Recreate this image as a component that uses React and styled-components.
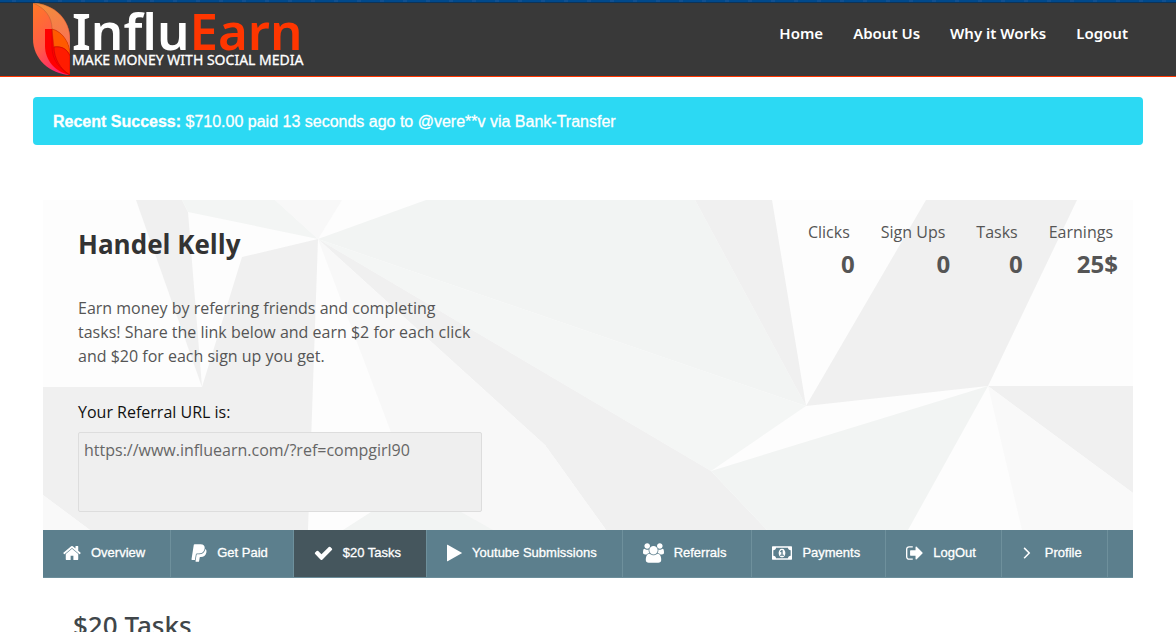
import React from "react";
import styled, { createGlobalStyle } from "styled-components";
import { FaPaypal } from "react-icons/fa";

const GlobalStyle = createGlobalStyle`
  *, *::before, *::after { box-sizing: border-box; }
  body {
    margin: 0;
    background: #fff;
    color: #555;
    font: 16px/24px "Open Sans", sans-serif;
  }
  h1, h2, p, ul, dl, dd { margin: 0; padding: 0; }
`;

const TopStrip = styled.div`
  height: 3px;
  background: repeating-linear-gradient(90deg, #00498c 0 12px, #0f5092 12px 16px, #00498c 16px 23px);
  border-bottom: 1px solid #0b3359;
`;

const Header = styled.header`
  display: flex;
  justify-content: space-between;
  height: 74px;
  padding: 0 33px;
  background: #393939;
  border-bottom: 1px solid #ff3600;
`;

const Brand = styled.a`
  display: flex;
  gap: 2px;
  color: #fff;
  text-decoration: none;
  font-family: "Noto Sans", sans-serif;
`;

const Leaf = styled.svg`
  width: 37px;
  height: 72px;
`;

const BrandText = styled.span`
  display: flex;
  flex-direction: column;
  white-space: nowrap;
`;

const BrandName = styled.span`
  font-size: 51px;
  line-height: 48px;
  height: 48px;
  font-weight: 600;
  padding-top: 3px;
`;

const Accent = styled.span`
  color: #ff3600;
`;

const Tagline = styled.span`
  font-size: 14px;
  line-height: 18px;
  font-weight: 400;
  -webkit-text-stroke: 0.3px #fff;
`;

const TopNav = styled.nav`
  display: flex;
  gap: 30px;
  padding: 18px 15px 0 0;
`;

const TopLink = styled.a`
  color: #fff;
  font: 600 15px/24px "Noto Sans", sans-serif;
  text-decoration: none;
  white-space: nowrap;
`;

const Main = styled.main`
  padding: 20px 33px;
`;

const Alert = styled.div`
  padding: 13px 20px 11px;
  border-radius: 4px;
  background: #2cd9f3;
  color: #fff;
  font-family: "Liberation Sans", Arial, sans-serif;
  -webkit-text-stroke: 0.3px #fff;
`;

const Panel = styled.section`
  margin: 55px 10px 0;
`;

const Hero = styled.div`
  position: relative;
  display: flex;
  justify-content: space-between;
  min-height: 330px;
  padding: 20px 15px 18px 35px;
`;

const Backdrop = styled.svg`
  position: absolute;
  inset: 0;
  width: 100%;
  height: 100%;
`;

const Profile = styled.div`
  position: relative;
  width: 404px;
`;

const Name = styled.h1`
  color: #333;
  font-size: 26px;
  line-height: 48px;
  font-weight: 700;
`;

const Intro = styled.p`
  margin-top: 28px;
`;

const UrlLabel = styled.label`
  display: block;
  margin-top: 32px;
  color: #111;
`;

const UrlBox = styled.textarea`
  display: block;
  width: 100%;
  height: 80px;
  margin-top: 8px;
  padding: 5px;
  border: 1px solid #ddd;
  border-radius: 2px;
  background: #efefef;
  color: #666;
  font: inherit;
  resize: none;
`;

const Stats = styled.dl`
  position: relative;
  display: flex;
  gap: 26px;
`;

const Stat = styled.div`
  display: flex;
  flex-direction: column;
  text-align: right;
`;

const StatLabel = styled.dt`
  padding-right: 5px;
`;

const StatValue = styled.dd`
  font-size: 24px;
  line-height: 40px;
  font-weight: 700;
`;

const Tabs = styled.nav`
  display: flex;
  height: 48px;
  background: #5c7f8d;
  border-bottom: 1px solid #6b8e9b;
`;

const Tab = styled.a`
  display: flex;
  align-items: center;
  gap: 10px;
  padding: 0 25px 2px 20px;
  border-right: 1px solid #6e909c;
  background: ${(p) => (p.$active ? "#45565d" : "transparent")};
  color: #fff;
  font: 13px/20px "Liberation Sans", Arial, sans-serif;
  -webkit-text-stroke: 0.3px #fff;
  text-decoration: none;
  white-space: nowrap;
`;

const Glyph = styled.svg`
  flex: none;
  width: ${(p) => p.$w}px;
  height: 20px;
  fill: currentColor;
`;

const PaypalGlyph = styled(FaPaypal)`
  flex: none;
  width: 16px;
  height: 20px;
`;

const Heading = styled.h2`
  margin: 28px 0 0 30px;
  color: #40464a;
  font: 500 26px/38px "Noto Sans", sans-serif;
`;

const icons = {
  home: { w: 18, box: "64 0 1664 1792", d: "M1472 992v480q0 26-19 45t-45 19h-384v-384h-256v384h-384q-26 0-45-19t-19-45v-480q0-1 .5-3t.5-3l575-474 575 474q1 2 1 6zm223-69l-62 74q-8 9-21 11h-3q-13 0-21-7l-692-577-692 577q-12 8-24 7-13-2-21-11l-62-74q-8-10-7-23.5t11-21.5l719-599q32-26 76-26t76 26l244 204v-195q0-14 9-23t23-9h192q14 0 23 9t9 23v408l219 182q10 8 11 21.5t-7 23.5z" },
  check: { w: 19, box: "64 0 1664 1792", d: "M1671 566q0 40-28 68l-724 724-136 136q-28 28-68 28t-68-28l-136-136-362-362q-28-28-28-68t28-68l136-136q28-28 68-28t68 28l294 295 656-657q28-28 68-28t68 28l136 136q28 28 28 68z" },
  play: { w: 15, box: "192 100 1408 1592", d: "M1576 927l-1328 738q-23 13-39.5 3t-16.5-36v-1472q0-26 16.5-36t39.5 3l1328 738q23 13 23 31t-23 31z" },
  users: { w: 21, box: "64 0 1920 1792", d: "M657 896q-162 5-265 128h-134q-82 0-138-40.5t-56-118.5q0-353 124-353 6 0 43.5 21t97.5 42.5 119 21.5q67 0 133-23-5 37-5 66 0 139 81 256zm1071 637q0 120-73 189.5t-194 69.5h-874q-121 0-194-69.5t-73-189.5q0-53 3.5-103.5t14-109 26.5-108.5 43-97.5 62-81 85.5-53.5 111.5-20q10 0 43 21.5t73 48 107 48 135 21.5 135-21.5 107-48 73-48 43-21.5q61 0 111.5 20t85.5 53.5 62 81 43 97.5 26.5 108.5 14 109 3.5 103.5zm-1024-1277q0 106-75 181t-181 75-181-75-75-181 75-181 181-75 181 75 75 181zm704 384q0 159-112.5 271.5t-271.5 112.5-271.5-112.5-112.5-271.5 112.5-271.5 271.5-112.5 271.5 112.5 112.5 271.5zm576 225q0 78-56 118.5t-138 40.5h-134q-103-123-265-128 81-117 81-256 0-29-5-66 66 23 133 23 59 0 119-21.5t97.5-42.5 43.5-21q124 0 124 353zm-128-609q0 106-75 181t-181 75-181-75-75-181 75-181 181-75 181 75 75 181z" },
  money: { w: 20, box: "0 0 1920 1792", d: "M768 1152h384v-96h-128v-448h-114l-148 137 77 80q42-37 55-57h2v288h-128v96zm512-256q0 70-21 142t-59.5 134-101.5 101-138 39-138-39-101.5-101-59.5-134-21-142 21-142 59.5-134 101.5-101 138-39 138 39 101.5 101 59.5 134 21 142zm512 256v-512q-106 0-181-75t-75-181h-1152q0 106-75 181t-181 75v512q106 0 181 75t75 181h1152q0-106 75-181t181-75zm128-832v1152q0 26-19 45t-45 19h-1792q-26 0-45-19t-19-45v-1152q0-26 19-45t45-19h1792q26 0 45 19t19 45z" },
  exit: { w: 17, box: "64 0 1600 1792", d: "M704 1440q0 4 1 20t.5 26.5-3 23.5-10 19.5-20.5 6.5h-320q-119 0-203.5-84.5t-84.5-203.5v-704q0-119 84.5-203.5t203.5-84.5h320q13 0 22.5 9.5t9.5 22.5q0 4 1 20t.5 26.5-3 23.5-10 19.5-20.5 6.5h-320q-66 0-113 47t-47 113v704q0 66 47 113t113 47h312l11.5 1 11.5 3 8 5.5 7 9 2 13.5zm928-544q0 26-19 45l-544 544q-19 19-45 19t-45-19-19-45v-288h-448q-26 0-45-19t-19-45v-384q0-26 19-45t45-19h448v-288q0-26 19-45t45-19 45 19l544 544q19 19 19 45z" },
  angle: { w: 13, box: "500 60 1040 1792", d: "M1171 960q0 13-10 23l-466 466q-10 10-23 10t-23-10l-50-50q-10-10-10-23t10-23l393-393-393-393q-10-10-10-23t10-23l50-50q10-10 23-10t23 10l466 466q10 10 10 23z" },
};

const Icon = ({ name }) =>
  name === "paypal" ? (
    <PaypalGlyph aria-hidden="true" />
  ) : (
    <Glyph $w={icons[name].w} viewBox={icons[name].box} aria-hidden="true">
      <path d={icons[name].d} />
    </Glyph>
  );

const facets = [
  ["93,0 139,0 145,12 159,187", "#f0f0f0"],
  ["139,0 232,0 275,39 145,12", "#f3f5f4"],
  ["232,0 299,0 275,39", "#f8f8f8"],
  ["275,39 383,0 652,0 763,206", "#f2f4f3"],
  ["275,39 763,206 668,271", "#f4f6f5"],
  ["275,39 668,271 724,330 563,330 502,245", "#f0f0f0"],
  ["275,39 502,245 563,330 385,330", "#f8f8f8"],
  ["199,57 275,39 265,330 47,330 0,295 0,187 159,187", "#f0f0f0"],
  ["0,295 47,330 0,330", "#f9f9f9"],
  ["390,310 502,245 563,330 440,330", "#f8f8f8"],
  ["300,330 370,285 450,330", "#f2f4f3"],
  ["652,0 729,0 763,206", "#f0f0f0"],
  ["883,0 1034,0 945,186 763,206", "#f0f0f0"],
  ["668,271 945,186 865,330 724,330", "#f2f4f3"],
  ["945,186 1090,186 1090,293", "#f0f0f0"],
  ["945,186 1090,293 1090,330 979,330", "#f9f9f9"],
];

const links = ["Home", "About Us", "Why it Works", "Logout"];
const stats = [["Clicks", "0"], ["Sign Ups", "0"], ["Tasks", "0"], ["Earnings", "25$"]];
const tabs = [
  ["home", "Overview"],
  ["paypal", "Get Paid"],
  ["check", "$20 Tasks"],
  ["play", "Youtube Submissions"],
  ["users", "Referrals"],
  ["money", "Payments"],
  ["exit", "LogOut"],
  ["angle", "Profile"],
];

export default function App() {
  return (
    <>
      <GlobalStyle />
      <TopStrip />
      <Header>
        <Brand href="#">
          <Leaf viewBox="0 0 37 72" aria-hidden="true">
            <defs>
              <linearGradient id="body" x1="0" y1="0" x2="0.5" y2="1">
                <stop offset="0" stopColor="#ff7a25" />
                <stop offset="0.6" stopColor="#ff5a48" />
                <stop offset="1" stopColor="#ff2468" />
              </linearGradient>
              <linearGradient id="back" x1="0" y1="0" x2="0.3" y2="1">
                <stop offset="0" stopColor="#f0903a" />
                <stop offset="1" stopColor="#f97352" />
              </linearGradient>
            </defs>
            <path d="M0 0C22 1 37 17 37 36V72C17 71 0 56 0 36Z" fill="url(#body)" />
            <path d="M0 0C22 1 37 17 37 36V48C33 36 28 28 19 26C19 14 12 5 0 0Z" fill="url(#back)" stroke="#a4502e" strokeWidth="0.4" />
            <path d="M12 26H19C30 29 37 40 37 52V72C22 69 12 57 12 43Z" fill="#f00" />
            <path d="M19 26C30 29 37 40 37 52C33 45 28 43 21 44Z" fill="#ff5a00" stroke="#b63a00" strokeWidth="0.4" />
            <path d="M21 44C29 43 34 46 37 53V72C27 66 21 55 21 44Z" fill="#ff1c00" stroke="#b00" strokeWidth="0.5" />
            <path d="M19 26V44C19 56 26 66 37 72" fill="none" stroke="#b00" strokeWidth="0.4" />
          </Leaf>
          <BrandText>
            <BrandName>Influ<Accent>Earn</Accent></BrandName>
            <Tagline>MAKE MONEY WITH SOCIAL MEDIA</Tagline>
          </BrandText>
        </Brand>
        <TopNav>
          {links.map((l) => <TopLink href="#" key={l}>{l}</TopLink>)}
        </TopNav>
      </Header>
      <Main>
        <Alert role="status">
          <strong>Recent Success:</strong> $710.00 paid 13 seconds ago to @vere**v via Bank-Transfer
        </Alert>
        <Panel>
          <Hero>
            <Backdrop viewBox="0 0 1090 330" preserveAspectRatio="none" aria-hidden="true">
              <rect width="1090" height="330" fill="#fdfdfd" />
              {facets.map(([points, fill]) => <polygon key={points} points={points} fill={fill} />)}
            </Backdrop>
            <Profile>
              <Name>Handel Kelly</Name>
              <Intro>
                Earn money by referring friends and completing tasks! Share the link below and earn $2 for each click and $20 for each sign up you get.
              </Intro>
              <UrlLabel htmlFor="referral">Your Referral URL is:</UrlLabel>
              <UrlBox id="referral" readOnly value="https://www.influearn.com/?ref=compgirl90" />
            </Profile>
            <Stats>
              {stats.map(([label, value]) => (
                <Stat key={label}>
                  <StatLabel>{label}</StatLabel>
                  <StatValue>{value}</StatValue>
                </Stat>
              ))}
            </Stats>
          </Hero>
          <Tabs>
            {tabs.map(([icon, label]) => (
              <Tab href="#" key={label} $active={label === "$20 Tasks"} aria-current={label === "$20 Tasks" ? "page" : undefined}>
                <Icon name={icon} />
                {label}
              </Tab>
            ))}
          </Tabs>
          <Heading>$20 Tasks</Heading>
        </Panel>
      </Main>
    </>
  );
}
